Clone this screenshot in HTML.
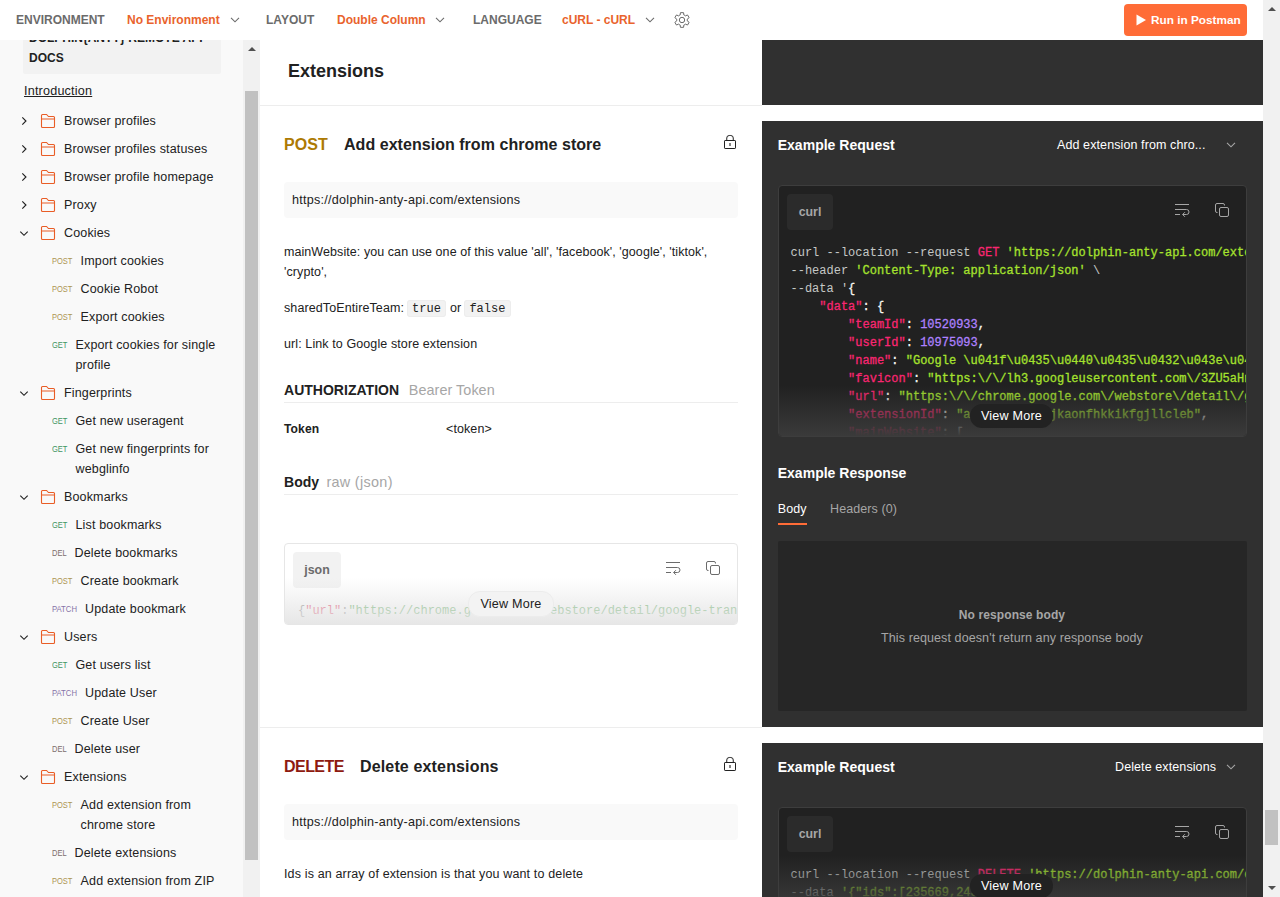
<!DOCTYPE html>
<html lang="en">
<head>
<meta charset="utf-8">
<title>Dolphin{anty} Remote API Docs</title>
<style>
*{box-sizing:border-box;margin:0;padding:0}
html,body{width:1280px;height:897px;overflow:hidden;background:#fff}
body{font-family:"Liberation Sans",Arial,sans-serif;font-size:12.5px;color:#212121;position:relative;-webkit-font-smoothing:antialiased}
.abs{position:absolute}
/* top bar */
#topbar{position:absolute;left:0;top:0;width:1263px;height:40px;background:#fff;z-index:10}
#topbar .lbl{position:absolute;top:0;line-height:40px;font-size:12px;font-weight:bold;color:#6b6b6b;white-space:nowrap;letter-spacing:0}
#topbar .val{color:#e9632d}
#topbar svg{position:absolute}
#run{position:absolute;left:1124px;top:4px;width:123px;height:32px;background:#ff6c37;border-radius:4px;color:#fff;font-weight:bold;font-size:11.8px;line-height:32px;white-space:nowrap}
#run span{position:absolute;left:27px;top:0}
/* scrollbars */
.track{position:absolute;background:#f1f1f1}
.thumb{position:absolute;background:#c1c1c1}
.arr{position:absolute;width:0;height:0;border-left:4px solid transparent;border-right:4px solid transparent}
.arr.up{border-bottom:4.5px solid #505050}
.arr.dn{border-top:4.500px solid #505050}
/* sidebar */
#side{position:absolute;left:0;top:40px;width:243px;height:857px;background:#f9f9f9;overflow:hidden}
#side .title{position:absolute;left:23px;top:-16px;width:198px;height:50px;background:#f2f2f2;border-radius:2px;padding:4px 6px;font-weight:bold;font-size:12px;line-height:20px;color:#212121;letter-spacing:0}
#side .intro{position:absolute;left:24px;top:41px;line-height:20px;text-decoration:underline;font-size:12.6px;letter-spacing:0.2px}
#tree{position:absolute;left:0;top:66px;width:243px}
.row{position:relative;min-height:28px;padding:5px 0 3px;line-height:20px;font-size:12.5px;letter-spacing:0.15px;color:#212121}
.row.f{padding-left:64px}
.row.f svg.ch{position:absolute;left:18px;top:8.75px}
.row.f svg.fo{position:absolute;left:40px;top:6px}
.row .m{position:absolute;left:52px;top:5px;font-size:9px;font-weight:normal;letter-spacing:0;line-height:21px;transform:scaleX(0.835);transform-origin:0 50%}
.patch .m{transform:scaleX(0.855)}
.row.post{padding-left:80.6px}.row.get{padding-left:75.5px}.row.del{padding-left:74.5px}.row.patch{padding-left:85px}
.post .m{color:#ad9552}.get .m{color:#3f9562}.del .m{color:#7d6e6c}.patch .m{color:#8673a8}
/* main */
#main{position:absolute;left:260px;top:40px;width:502px;height:857px;background:#fff;overflow:hidden}
#dark{position:absolute;left:762px;top:40px;width:501px;height:857px;background:#fff;overflow:hidden}
.dk{position:absolute;left:0;width:501px;background:#303030}
.hr{position:absolute;height:1px;background:#ededed}
.t{position:absolute;white-space:nowrap;margin-top:1px}
.h1{font-size:18px;font-weight:bold;letter-spacing:0}
.h2{font-size:16px;font-weight:bold;letter-spacing:0.04px}
.h3{font-size:14px;font-weight:bold;letter-spacing:0.02px}
.h3r{font-size:14.4px;font-weight:normal;letter-spacing:0.05px;color:#a6a6a6}
.p{font-size:12.5px;letter-spacing:0.1px;line-height:20px}
.url{position:absolute;left:24px;width:454px;height:36px;background:#f9f9f9;border-radius:4px;line-height:36px;padding-left:8px;font-size:12.6px;letter-spacing:0.255px}
code{font-family:"Liberation Mono","DejaVu Sans Mono",monospace}
.ic{font-family:"Liberation Mono",monospace;font-size:12px;background:#f2f2f2;border:1px solid #ededed;border-radius:3px;padding:0.5px 4.5px;letter-spacing:0;margin-left:-1px;position:relative;top:-0.5px}
.mono{font-family:"Liberation Mono","DejaVu Sans Mono",monospace;font-size:12px;line-height:18px;white-space:pre;letter-spacing:0}
.k{color:#f92672}.s{color:#a6e22e}.n{color:#ae81ff}.w{color:#f8f8f2}.k,.s,.n,.w{-webkit-text-stroke:0.28px currentColor}.g{color:#c5c8c6}

.jbox{position:absolute;border:1px solid #e6e6e6;border-radius:4px;background:#fff;overflow:hidden}
.jbox .chip{position:absolute;left:8px;top:8px;width:48px;height:36px;background:#f2f2f2;border-radius:4px;text-align:center;line-height:36px;font-weight:bold;font-size:12.4px;color:#6b6b6b}
.jcode{position:absolute;left:13px;top:58px;opacity:.72}
.jbox .fade{position:absolute;left:0;top:34px;width:100%;height:46px;background:linear-gradient(rgba(255,255,255,0),rgba(228,228,228,.9))}
.vm{position:absolute;height:24px;border-radius:12px;line-height:24px;text-align:center;font-size:12.6px;letter-spacing:.2px;white-space:nowrap}
.jbox .vm{left:183px;top:47px;width:85.500px;height:25.500px;background:#f3f3f3;border:1px solid #ececec;color:#212121;line-height:24px;text-indent:0.500px}

.cbox{position:absolute;border-radius:4px;background:#212121;overflow:hidden;border:1px solid #3d3d3d}
.cbox .chip{position:absolute;left:8px;top:8px;width:46px;height:36px;background:#2b2b2b;border-radius:4px;text-align:center;line-height:36px;font-weight:bold;font-size:12.4px;color:#a6a6a6}
.ccode{position:absolute;left:11.5px;top:58px}
.cbox .fade{position:absolute;left:0;bottom:0;width:100%;height:50px;background:linear-gradient(rgba(56,56,56,0),rgba(58,58,58,1))}
.cbox .vm{left:191px;bottom:8px;width:83px;background:#222;color:#fff;line-height:24px}
</style>
</head>
<body>
<div id="topbar">
  <span class="lbl" style="left:16px">ENVIRONMENT</span>
  <span class="lbl val" style="left:127px">No Environment</span>
  <svg style="left:230px;top:16px" width="10" height="8" viewBox="0 0 10 8"><path d="M1 1.8 L5 5.8 L9 1.8" fill="none" stroke="#6b6b6b" stroke-width="1.1"/></svg>
  <span class="lbl" style="left:266px">LAYOUT</span>
  <span class="lbl val" style="left:337px">Double Column</span>
  <svg style="left:435px;top:16px" width="10" height="8" viewBox="0 0 10 8"><path d="M1 1.8 L5 5.8 L9 1.8" fill="none" stroke="#6b6b6b" stroke-width="1.1"/></svg>
  <span class="lbl" style="left:473px">LANGUAGE</span>
  <span class="lbl val" style="left:562px">cURL - cURL</span>
  <svg style="left:645px;top:16px" width="10" height="8" viewBox="0 0 10 8"><path d="M1 1.8 L5 5.8 L9 1.8" fill="none" stroke="#6b6b6b" stroke-width="1.1"/></svg>
  <svg style="left:674px;top:12px" width="16" height="16" viewBox="0 0 16 16"><g fill="none" stroke="#6b6b6b" stroke-width="1" stroke-linejoin="round"><circle cx="8" cy="8" r="2.700"/><path d="M9.90 3.05 L9.56 0.66 L6.44 0.66 L6.10 3.05 A5.30 5.30 0 0 0 4.66 3.88 L2.43 2.98 L0.87 5.68 L2.77 7.17 A5.30 5.30 0 0 0 2.77 8.83 L0.87 10.32 L2.43 13.02 L4.66 12.12 A5.30 5.30 0 0 0 6.10 12.95 L6.44 15.34 L9.56 15.34 L9.90 12.95 A5.30 5.30 0 0 0 11.34 12.12 L13.57 13.02 L15.13 10.32 L13.23 8.83 A5.30 5.30 0 0 0 13.23 7.17 L15.13 5.68 L13.57 2.98 L11.34 3.88 A5.30 5.30 0 0 0 9.90 3.05 Z"/></g></svg>
  <div id="run"><svg style="left:12px;top:10px" width="11" height="12" viewBox="0 0 11 12"><path d="M0.500 0.500 L10 6 L0.500 11.500z" fill="#fff"/></svg><span>Run in Postman</span></div>
</div>
<!-- page scrollbar -->
<div class="track" style="left:1263px;top:0;width:17px;height:897px"></div>
<div class="thumb" style="left:1265px;top:810px;width:13px;height:35px"></div>
<div class="arr up" style="left:1267.5px;top:6.8px"></div>
<div class="arr dn" style="left:1267.5px;top:885.7px"></div>
<!-- sidebar scrollbar -->
<div class="track" style="left:243px;top:40px;width:17px;height:857px"></div>
<div class="thumb" style="left:245px;top:91px;width:13px;height:769px"></div>
<div class="arr up" style="left:247.500px;top:46.800px"></div>

<div id="side">
  <div class="title"><span style="white-space:nowrap">DOLPHIN{ANTY} REMOTE API</span><br>DOCS</div>
  <div class="intro">Introduction</div>
  <div id="tree">
<div class="row f"><svg class="ch" width="12" height="12" viewBox="0 0 12 12"><path d="M4.300 2.350 L7.950 6 L4.300 9.650" fill="none" stroke="#212121" stroke-width="1.15"/></svg><svg class="fo" width="16" height="17" viewBox="0 0 16 17"><path d="M1.500 14.500 V3.500 Q1.500 2.500 2.500 2.500 H6.600 L8.400 4.500 H13.500 Q14.500 4.500 14.500 5.500 V14.500 Q14.500 15.500 13.500 15.500 H2.500 Q1.500 15.500 1.500 14.500 Z M1.500 7 H14.500" fill="none" stroke="#e95d26" stroke-width="1.1" stroke-linejoin="round"/></svg>Browser profiles</div>
<div class="row f"><svg class="ch" width="12" height="12" viewBox="0 0 12 12"><path d="M4.300 2.350 L7.950 6 L4.300 9.650" fill="none" stroke="#212121" stroke-width="1.15"/></svg><svg class="fo" width="16" height="17" viewBox="0 0 16 17"><path d="M1.500 14.500 V3.500 Q1.500 2.500 2.500 2.500 H6.600 L8.400 4.500 H13.500 Q14.500 4.500 14.500 5.500 V14.500 Q14.500 15.500 13.500 15.500 H2.500 Q1.500 15.500 1.500 14.500 Z M1.500 7 H14.500" fill="none" stroke="#e95d26" stroke-width="1.1" stroke-linejoin="round"/></svg>Browser profiles statuses</div>
<div class="row f"><svg class="ch" width="12" height="12" viewBox="0 0 12 12"><path d="M4.300 2.350 L7.950 6 L4.300 9.650" fill="none" stroke="#212121" stroke-width="1.15"/></svg><svg class="fo" width="16" height="17" viewBox="0 0 16 17"><path d="M1.500 14.500 V3.500 Q1.500 2.500 2.500 2.500 H6.600 L8.400 4.500 H13.500 Q14.500 4.500 14.500 5.500 V14.500 Q14.500 15.500 13.500 15.500 H2.500 Q1.500 15.500 1.500 14.500 Z M1.500 7 H14.500" fill="none" stroke="#e95d26" stroke-width="1.1" stroke-linejoin="round"/></svg>Browser profile homepage</div>
<div class="row f"><svg class="ch" width="12" height="12" viewBox="0 0 12 12"><path d="M4.300 2.350 L7.950 6 L4.300 9.650" fill="none" stroke="#212121" stroke-width="1.15"/></svg><svg class="fo" width="16" height="17" viewBox="0 0 16 17"><path d="M1.500 14.500 V3.500 Q1.500 2.500 2.500 2.500 H6.600 L8.400 4.500 H13.500 Q14.500 4.500 14.500 5.500 V14.500 Q14.500 15.500 13.500 15.500 H2.500 Q1.500 15.500 1.500 14.500 Z M1.500 7 H14.500" fill="none" stroke="#e95d26" stroke-width="1.1" stroke-linejoin="round"/></svg>Proxy</div>
<div class="row f"><svg class="ch" width="12" height="12" viewBox="0 0 12 12"><path d="M2.300 4.600 L6 8.300 L9.700 4.600" fill="none" stroke="#212121" stroke-width="1.15"/></svg><svg class="fo" width="16" height="17" viewBox="0 0 16 17"><path d="M1.500 14.500 V3.500 Q1.500 2.500 2.500 2.500 H6.600 L8.400 4.500 H13.500 Q14.500 4.500 14.500 5.500 V14.500 Q14.500 15.500 13.500 15.500 H2.500 Q1.500 15.500 1.500 14.500 Z M1.500 7 H14.500" fill="none" stroke="#e95d26" stroke-width="1.1" stroke-linejoin="round"/></svg>Cookies</div>
<div class="row post"><span class="m">POST</span>Import cookies</div>
<div class="row post"><span class="m">POST</span>Cookie Robot</div>
<div class="row post"><span class="m">POST</span>Export cookies</div>
<div class="row get"><span class="m">GET</span>Export cookies for single<br>profile</div>
<div class="row f"><svg class="ch" width="12" height="12" viewBox="0 0 12 12"><path d="M2.300 4.600 L6 8.300 L9.700 4.600" fill="none" stroke="#212121" stroke-width="1.15"/></svg><svg class="fo" width="16" height="17" viewBox="0 0 16 17"><path d="M1.500 14.500 V3.500 Q1.500 2.500 2.500 2.500 H6.600 L8.400 4.500 H13.500 Q14.500 4.500 14.500 5.500 V14.500 Q14.500 15.500 13.500 15.500 H2.500 Q1.500 15.500 1.500 14.500 Z M1.500 7 H14.500" fill="none" stroke="#e95d26" stroke-width="1.1" stroke-linejoin="round"/></svg>Fingerprints</div>
<div class="row get"><span class="m">GET</span>Get new useragent</div>
<div class="row get"><span class="m">GET</span>Get new fingerprints for<br>webglinfo</div>
<div class="row f"><svg class="ch" width="12" height="12" viewBox="0 0 12 12"><path d="M2.300 4.600 L6 8.300 L9.700 4.600" fill="none" stroke="#212121" stroke-width="1.15"/></svg><svg class="fo" width="16" height="17" viewBox="0 0 16 17"><path d="M1.500 14.500 V3.500 Q1.500 2.500 2.500 2.500 H6.600 L8.400 4.500 H13.500 Q14.500 4.500 14.500 5.500 V14.500 Q14.500 15.500 13.500 15.500 H2.500 Q1.500 15.500 1.500 14.500 Z M1.500 7 H14.500" fill="none" stroke="#e95d26" stroke-width="1.1" stroke-linejoin="round"/></svg>Bookmarks</div>
<div class="row get"><span class="m">GET</span>List bookmarks</div>
<div class="row del"><span class="m">DEL</span>Delete bookmarks</div>
<div class="row post"><span class="m">POST</span>Create bookmark</div>
<div class="row patch"><span class="m">PATCH</span>Update bookmark</div>
<div class="row f"><svg class="ch" width="12" height="12" viewBox="0 0 12 12"><path d="M2.300 4.600 L6 8.300 L9.700 4.600" fill="none" stroke="#212121" stroke-width="1.15"/></svg><svg class="fo" width="16" height="17" viewBox="0 0 16 17"><path d="M1.500 14.500 V3.500 Q1.500 2.500 2.500 2.500 H6.600 L8.400 4.500 H13.500 Q14.500 4.500 14.500 5.500 V14.500 Q14.500 15.500 13.500 15.500 H2.500 Q1.500 15.500 1.500 14.500 Z M1.500 7 H14.500" fill="none" stroke="#e95d26" stroke-width="1.1" stroke-linejoin="round"/></svg>Users</div>
<div class="row get"><span class="m">GET</span>Get users list</div>
<div class="row patch"><span class="m">PATCH</span>Update User</div>
<div class="row post"><span class="m">POST</span>Create User</div>
<div class="row del"><span class="m">DEL</span>Delete user</div>
<div class="row f"><svg class="ch" width="12" height="12" viewBox="0 0 12 12"><path d="M2.300 4.600 L6 8.300 L9.700 4.600" fill="none" stroke="#212121" stroke-width="1.15"/></svg><svg class="fo" width="16" height="17" viewBox="0 0 16 17"><path d="M1.500 14.500 V3.500 Q1.500 2.500 2.500 2.500 H6.600 L8.400 4.500 H13.500 Q14.500 4.500 14.500 5.500 V14.500 Q14.500 15.500 13.500 15.500 H2.500 Q1.500 15.500 1.500 14.500 Z M1.500 7 H14.500" fill="none" stroke="#e95d26" stroke-width="1.1" stroke-linejoin="round"/></svg>Extensions</div>
<div class="row post"><span class="m">POST</span>Add extension from<br>chrome store</div>
<div class="row del"><span class="m">DEL</span>Delete extensions</div>
<div class="row post"><span class="m">POST</span>Add extension from ZIP</div>
</div>
</div>
<div id="main">
<div class="t h1" style="left:28px;top:16.0px;line-height:28px;">Extensions</div>
<div class="hr" style="left:0;top:65px;width:502px"></div>
<div class="t h2" style="left:24px;top:92.0px;line-height:24px;color:#ad7a03">POST</div>
<div class="t h2" style="left:84px;top:92.0px;line-height:24px;">Add extension from chrome store</div>
<svg class="abs" style="left:463px;top:94px" width="14" height="16" viewBox="0 0 14 16"><rect x="1.500" y="6.500" width="11" height="8" rx="0.600" fill="none" stroke="#212121" stroke-width="1"/><path d="M3.750 6.500 V4 Q3.750 1.500 6.250 1.500 H7.750 Q10.250 1.500 10.250 4 V6.500" fill="none" stroke="#212121" stroke-width="1"/><rect x="6" y="9" width="2" height="3" fill="#858585"/></svg>
<div class="url" style="top:142px">https://dolphin-anty-api.com/extensions</div>
<div class="t p" style="left:24px;top:201.0px;line-height:20px;letter-spacing:0.07px">mainWebsite: you can use one of this value 'all', 'facebook', 'google', 'tiktok',</div>
<div class="t p" style="left:24px;top:221.0px;line-height:20px;">'crypto',</div>
<div class="t p" style="left:24px;top:257.0px;line-height:20px;">sharedToEntireTeam: <code class="ic">true</code> or <code class="ic">false</code></div>
<div class="t p" style="left:24px;top:293.0px;line-height:20px;">url: Link to Google store extension</div>
<div class="t h3" style="left:24px;top:339.0px;line-height:20px;">AUTHORIZATION</div>
<div class="t h3r" style="left:148.8px;top:339.0px;line-height:20px;">Bearer Token</div>
<div class="hr" style="left:24px;top:362px;width:454px"></div>
<div class="t p" style="left:24px;top:378.0px;line-height:20px;font-weight:bold;font-size:12.1px">Token</div>
<div class="t p" style="left:186px;top:378.0px;line-height:20px;">&lt;token&gt;</div>
<div class="t h3" style="left:24px;top:431.0px;line-height:20px;">Body</div>
<div class="t h3r" style="left:66.4px;top:431.0px;line-height:20px;letter-spacing:0.32px">raw (json)</div>
<div class="hr" style="left:24px;top:454px;width:454px"></div>
<div class="jbox" style="left:24px;top:503px;width:454px;height:82px"><div class="chip">json</div><svg class="abs" style="left:380px;top:16px" width="16" height="16" viewBox="0 0 16 16"><path d="M1 2.500 H15 M1 7.500 H12.500 a2.500 2.500 0 0 1 0 5 H8.800 M1 12.500 H6 M10.900 10.200 L8.600 12.500 L10.900 14.800" fill="none" stroke="#6b6b6b" stroke-width="1"/></svg><svg class="abs" style="left:420px;top:16px" width="16" height="16" viewBox="0 0 16 16"><rect x="5.500" y="5.500" width="9" height="9" rx="1.500" fill="none" stroke="#6b6b6b" stroke-width="1"/><path d="M3.500 10.500 H3 a1.500 1.500 0 0 1 -1.500 -1.500 V3 a1.500 1.500 0 0 1 1.500 -1.500 H9 a1.500 1.500 0 0 1 1.500 1.500 V3.500" fill="none" stroke="#6b6b6b" stroke-width="1"/></svg><div class="mono jcode"><span style="color:#6b6b6b">{</span><span style="color:#d14">"url"</span><span style="color:#6b6b6b">:</span><span style="color:#3c9a3c">"https://chrome.google.com/webstore/detail/google-translate/aapbdbdomjkkjkaonfhkkikfgjllcleb"</span><span style="color:#6b6b6b">,"sharedToEntireTeam":false,"mainWebsite":["all"]}</span></div><div class="fade"></div><div class="vm">View More</div></div>
<div class="hr" style="left:0;top:687px;width:502px"></div>
<div class="t h2" style="left:24px;top:714.0px;line-height:24px;color:#8e1a10;letter-spacing:-0.55px">DELETE</div>
<div class="t h2" style="left:100px;top:714.0px;line-height:24px;letter-spacing:0.15px">Delete extensions</div>
<svg class="abs" style="left:463px;top:716px" width="14" height="16" viewBox="0 0 14 16"><rect x="1.500" y="6.500" width="11" height="8" rx="0.600" fill="none" stroke="#212121" stroke-width="1"/><path d="M3.750 6.500 V4 Q3.750 1.500 6.250 1.500 H7.750 Q10.250 1.500 10.250 4 V6.500" fill="none" stroke="#212121" stroke-width="1"/><rect x="6" y="9" width="2" height="3" fill="#858585"/></svg>
<div class="url" style="top:764px">https://dolphin-anty-api.com/extensions</div>
<div class="t p" style="left:24px;top:823.0px;line-height:20px;letter-spacing:0.145px">Ids is an array of extension is that you want to delete</div>
</div>
<div id="dark">
<div class="dk" style="top:0;height:65px"></div>
<div class="dk" style="top:81px;height:606px"></div>
<div class="dk" style="top:703px;height:154px"></div>
<div class="t h3" style="left:15.7px;top:94.0px;line-height:20px;color:#fff">Example Request</div>
<div class="t p" style="left:295px;top:94.0px;line-height:20px;color:#fff">Add extension from chro...</div>
<svg class="abs" style="left:464px;top:101px" width="10" height="8" viewBox="0 0 10 8"><path d="M1 1.800 L5 5.800 L9 1.800" fill="none" stroke="#a6a6a6" stroke-width="1.100"/></svg>
<div class="cbox" style="left:16px;top:145px;width:469px;height:252px"><div class="chip">curl</div><svg class="abs" style="left:395px;top:16px" width="16" height="16" viewBox="0 0 16 16"><path d="M1 2.500 H15 M1 7.500 H12.500 a2.500 2.500 0 0 1 0 5 H8.800 M1 12.500 H6 M10.900 10.200 L8.600 12.500 L10.900 14.800" fill="none" stroke="#a6a6a6" stroke-width="1"/></svg><svg class="abs" style="left:435px;top:16px" width="16" height="16" viewBox="0 0 16 16"><rect x="5.500" y="5.500" width="9" height="9" rx="1.500" fill="none" stroke="#a6a6a6" stroke-width="1"/><path d="M3.500 10.500 H3 a1.500 1.500 0 0 1 -1.500 -1.500 V3 a1.500 1.500 0 0 1 1.500 -1.500 H9 a1.500 1.500 0 0 1 1.500 1.500 V3.500" fill="none" stroke="#a6a6a6" stroke-width="1"/></svg><div class="mono ccode"><span class="g">curl --location --request </span><span class="k">GET</span><span class="g"> </span><span class="s">'https://dolphin-anty-api.com/extensions'</span><span class="g"> \</span>
<span class="g">--header </span><span class="s">'Content-Type: application/json'</span><span class="g"> \</span>
<span class="g">--data '</span><span class="w">{</span>
    <span class="k">"data"</span><span class="w">: {</span>
        <span class="k">"teamId"</span><span class="w">: </span><span class="n">10520933</span><span class="w">,</span>
        <span class="k">"userId"</span><span class="w">: </span><span class="n">10975093</span><span class="w">,</span>
        <span class="k">"name"</span><span class="w">: </span><span class="s">"Google \u041f\u0435\u0440\u0435\u0432\u043e\u0434\u0447\u0438\u043a"</span><span class="w">,</span>
        <span class="k">"favicon"</span><span class="w">: </span><span class="s">"https:\/\/lh3.googleusercontent.com\/3ZU5aHnsnQUl9ySPrGBqe5LXz_z9DK05DEfk10tpKHv5cvG19elbOr0BdW_k8GjLMFDexT2QHlDwAmW62iLVdek--Q"</span><span class="w">,</span>
        <span class="k">"url"</span><span class="w">: </span><span class="s">"https:\/\/chrome.google.com\/webstore\/detail\/google-translate\/aapbdbdomjkkjkaonfhkkikfgjllcleb"</span><span class="w">,</span>
        <span class="k">"extensionId"</span><span class="w">: </span><span class="s">"aapbdbdomjkkjkaonfhkkikfgjllcleb"</span><span class="w">,</span>
        <span class="k">"mainWebsite"</span><span class="w">: [</span>
            <span class="s">"all"</span>
        <span class="w">],</span></div><div class="fade"></div><div class="vm">View More</div></div>
<div class="t h3" style="left:15.7px;top:422.0px;line-height:20px;color:#fff">Example Response</div>
<div class="t p" style="left:15.8px;top:458.0px;line-height:20px;color:#fff">Body</div>
<div class="abs" style="left:16px;top:483px;width:29px;height:2px;background:#ff6c37"></div>
<div class="t p" style="left:68px;top:458.0px;line-height:20px;color:#a6a6a6">Headers (0)</div>
<div class="abs" style="left:16px;top:501px;width:469px;height:170px;background:#262626;border-radius:2px"></div>
<div class="t p" style="left:15px;width:470px;top:564px;text-align:center;font-weight:bold;font-size:12px;color:#a6a6a6">No response body</div>
<div class="t p" style="left:15px;width:470px;top:587px;text-align:center;color:#a6a6a6">This request doesn't return any response body</div>
<div class="t h3" style="left:15.7px;top:716.0px;line-height:20px;color:#fff">Example Request</div>
<div class="t p" style="left:353px;top:716.0px;line-height:20px;color:#fff">Delete extensions</div>
<svg class="abs" style="left:464px;top:723px" width="10" height="8" viewBox="0 0 10 8"><path d="M1 1.800 L5 5.800 L9 1.800" fill="none" stroke="#a6a6a6" stroke-width="1.100"/></svg>
<div class="cbox" style="left:16px;top:767px;width:469px;height:100px"><div class="chip">curl</div><svg class="abs" style="left:395px;top:16px" width="16" height="16" viewBox="0 0 16 16"><path d="M1 2.500 H15 M1 7.500 H12.500 a2.500 2.500 0 0 1 0 5 H8.800 M1 12.500 H6 M10.900 10.200 L8.600 12.500 L10.900 14.800" fill="none" stroke="#a6a6a6" stroke-width="1"/></svg><svg class="abs" style="left:435px;top:16px" width="16" height="16" viewBox="0 0 16 16"><rect x="5.500" y="5.500" width="9" height="9" rx="1.500" fill="none" stroke="#a6a6a6" stroke-width="1"/><path d="M3.500 10.500 H3 a1.500 1.500 0 0 1 -1.500 -1.500 V3 a1.500 1.500 0 0 1 1.500 -1.500 H9 a1.500 1.500 0 0 1 1.500 1.500 V3.500" fill="none" stroke="#a6a6a6" stroke-width="1"/></svg><div class="mono ccode"><span class="g">curl --location --request </span><span class="k">DELETE</span><span class="g"> </span><span class="s">'https://dolphin-anty-api.com/extensions'</span><span class="g"> \</span>
<span class="g">--data </span><span class="s">'{"ids":[235669,243511]}'</span></div><div class="fade"></div><div class="vm">View More</div></div>
</div>
</body>
</html>
